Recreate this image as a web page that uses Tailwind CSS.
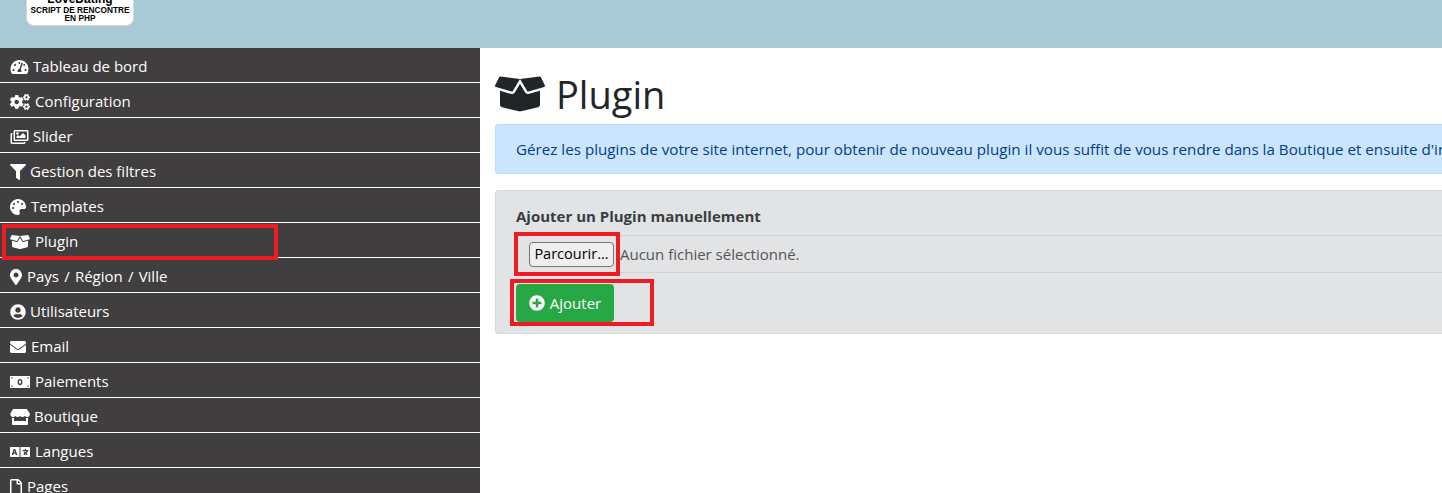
<!DOCTYPE html>
<html lang="fr">
<head>
    <meta charset="UTF-8">
    <meta name="viewport" content="width=device-width, initial-scale=1.0">
    <title>Plugin</title>
    <script src="https://cdn.jsdelivr.net/npm/@tailwindcss/browser@4"></script>
</head>
<body class="h-[493px] overflow-hidden bg-white font-['Open_Sans',sans-serif] text-[15px] text-[#212529]">

    <!-- Header -->
    <header class="h-12 overflow-hidden bg-[#a9c9d5] pl-[26px]">
        <div class="mt-[-8px] h-[34px] w-[108px] rounded-b-lg border border-[#d8d8d8] bg-white text-center font-['Liberation_Sans',sans-serif] font-bold leading-none text-black">
            <p class="text-[12px] leading-[13px]">LoveDating</p>
            <p class="text-[8.3px] leading-[8px]">SCRIPT DE RENCONTRE</p>
            <p class="text-[8.3px] leading-[8px]">EN PHP</p>
        </div>
    </header>

    <div class="flex">
        <!-- Sidebar -->
        <nav class="w-[480px] shrink-0 bg-[#403e3f] text-white">
            <a class="flex h-[35px] items-center gap-[4px] border-b border-white pt-[3px] pl-[10px]">
                <svg class="h-[16px] w-[19px] fill-current" viewBox="0 0 576 512"><path d="M288 32C128.94 32 0 160.94 0 320c0 52.8 14.25 102.26 39.06 144.8 5.61 9.62 16.3 15.2 27.44 15.2h443c11.14 0 21.83-5.58 27.44-15.2C561.75 422.26 576 372.8 576 320c0-159.06-128.94-288-288-288zm0 64c14.71 0 26.58 10.13 30.32 23.65-1.11 2.26-2.64 4.23-3.45 6.67l-9.22 27.67c-5.13 3.49-10.97 6.01-17.64 6.01-17.67 0-32-14.33-32-32S270.33 96 288 96zM96 384c-17.67 0-32-14.33-32-32s14.33-32 32-32 32 14.33 32 32-14.33 32-32 32zm48-160c-17.67 0-32-14.33-32-32s14.33-32 32-32 32 14.33 32 32-14.33 32-32 32zm246.77-72.41l-61.33 184C343.13 347.33 352 364.54 352 384c0 11.72-3.38 22.55-8.88 32H232.88c-5.5-9.45-8.88-20.28-8.88-32 0-33.94 26.5-61.43 59.9-63.59l61.34-184.01c4.17-12.56 17.73-19.45 30.36-15.17 12.57 4.19 19.35 17.79 15.17 30.36zm14.66 57.2l15.52-46.55c3.47-1.29 7.13-2.23 11.05-2.23 17.67 0 32 14.33 32 32s-14.33 32-32 32c-11.38-.01-20.89-6.28-26.57-15.22zM480 384c-17.67 0-32-14.33-32-32s14.33-32 32-32 32 14.33 32 32-14.33 32-32 32z"/></svg>
                <span>Tableau de bord</span>
            </a>
            <a class="flex h-[35px] items-center gap-[5px] border-b border-white pt-[3px] pl-[10px]">
                <svg class="h-[16px] w-[20px] fill-current" viewBox="0 0 640 512"><path d="M512.1 191l-8.2 14.3c-3 5.3-9.4 7.5-15.1 5.4-11.8-4.4-22.6-10.7-32.1-18.6-4.6-3.8-5.8-10.5-2.8-15.7l8.2-14.3c-6.9-8-12.3-17.3-15.9-27.4h-16.5c-6 0-11.2-4.3-12.2-10.3-2-12-2.1-24.6 0-37.1 1-6 6.2-10.4 12.2-10.4h16.5c3.6-10.1 9-19.4 15.9-27.4l-8.2-14.3c-3-5.2-1.9-11.9 2.8-15.7 9.5-7.9 20.4-14.2 32.1-18.6 5.7-2.1 12.1.1 15.1 5.4l8.2 14.3c10.5-1.9 21.2-1.9 31.7 0L552 6.3c3-5.3 9.4-7.5 15.1-5.4 11.8 4.4 22.6 10.7 32.1 18.6 4.6 3.8 5.8 10.5 2.8 15.7l-8.2 14.3c6.9 8 12.3 17.3 15.9 27.4h16.5c6 0 11.2 4.3 12.2 10.3 2 12 2.1 24.6 0 37.1-1 6-6.2 10.4-12.2 10.4h-16.5c-3.6 10.1-9 19.4-15.9 27.4l8.2 14.3c3 5.2 1.9 11.9-2.8 15.7-9.5 7.9-20.4 14.2-32.1 18.6-5.7 2.1-12.1-.1-15.1-5.4l-8.2-14.3c-10.4 1.9-21.2 1.9-31.7 0zm-10.5-58.8c38.5 29.6 82.4-14.3 52.8-52.8-38.5-29.7-82.4 14.3-52.8 52.8zM386.3 286.1l33.7 16.8c10.1 5.8 14.5 18.1 10.5 29.1-8.9 24.2-26.4 46.4-42.6 65.8-7.4 8.9-20.2 11.1-30.3 5.3l-29.1-16.8c-16 13.7-34.6 24.6-54.9 31.7v33.6c0 11.6-8.3 21.6-19.7 23.6-24.6 4.2-50.4 4.4-75.9 0-11.5-2-20-11.9-20-23.6V418c-20.3-7.2-38.9-18-54.9-31.7L74 403c-10 5.8-22.9 3.6-30.3-5.3-16.2-19.4-33.3-41.6-42.2-65.7-4-10.9.4-23.2 10.5-29.1l33.3-16.8c-3.9-20.9-3.9-42.4 0-63.4L12 205.8c-10.1-5.8-14.6-18.1-10.5-29 8.9-24.2 26-46.4 42.2-65.8 7.4-8.9 20.2-11.1 30.3-5.3l29.1 16.8c16-13.7 34.6-24.6 54.9-31.7V57.1c0-11.5 8.2-21.5 19.6-23.5 24.6-4.2 50.5-4.4 76-.1 11.5 2 20 11.9 20 23.6v33.6c20.3 7.2 38.9 18 54.9 31.7l29.1-16.8c10-5.8 22.9-3.6 30.3 5.3 16.2 19.4 33.2 41.6 42.1 65.8 4 10.9.1 23.2-10 29.1l-33.7 16.8c3.9 21 3.9 42.5 0 63.5zm-117.6 21.1c59.2-77-28.7-164.9-105.7-105.7-59.2 77 28.7 164.9 105.7 105.7zm243.4 182.7l-8.2 14.3c-3 5.3-9.4 7.5-15.1 5.4-11.8-4.4-22.6-10.7-32.1-18.6-4.6-3.8-5.8-10.5-2.8-15.7l8.2-14.3c-6.9-8-12.3-17.3-15.9-27.4h-16.5c-6 0-11.2-4.3-12.2-10.3-2-12-2.1-24.6 0-37.1 1-6 6.2-10.4 12.2-10.4h16.5c3.6-10.1 9-19.4 15.9-27.4l-8.2-14.3c-3-5.2-1.9-11.9 2.8-15.7 9.5-7.9 20.4-14.2 32.1-18.6 5.7-2.1 12.1.1 15.1 5.4l8.2 14.3c10.5-1.9 21.2-1.9 31.7 0l8.2-14.3c3-5.3 9.4-7.5 15.1-5.4 11.8 4.4 22.6 10.7 32.1 18.6 4.6 3.8 5.8 10.5 2.8 15.7l-8.2 14.3c6.9 8 12.3 17.3 15.9 27.4h16.5c6 0 11.2 4.3 12.2 10.3 2 12 2.1 24.6 0 37.1-1 6-6.2 10.4-12.2 10.4h-16.5c-3.6 10.1-9 19.4-15.9 27.4l8.2 14.3c3 5.2 1.9 11.9-2.8 15.7-9.5 7.9-20.4 14.2-32.1 18.6-5.7 2.1-12.1-.1-15.1-5.4l-8.2-14.3c-10.4 1.9-21.2 1.9-31.7 0zM501.6 431c38.5 29.6 82.4-14.3 52.8-52.8-38.5-29.6-82.4 14.3-52.8 52.8z"/></svg>
                <span>Configuration</span>
            </a>
            <a class="flex h-[35px] items-center gap-[4px] border-b border-white pt-[3px] pl-[10px]">
                <svg class="h-[16px] w-[19px] fill-current" viewBox="0 0 576 512"><path d="M480 416v16c0 26.51-21.49 48-48 48H48c-26.51 0-48-21.49-48-48V176c0-26.51 21.49-48 48-48h16v48H54a6 6 0 0 0-6 6v244a6 6 0 0 0 6 6h372a6 6 0 0 0 6-6v-10h48zm42-336H150a6 6 0 0 0-6 6v244a6 6 0 0 0 6 6h372a6 6 0 0 0 6-6V86a6 6 0 0 0-6-6zm6-48c26.51 0 48 21.49 48 48v256c0 26.51-21.49 48-48 48H144c-26.51 0-48-21.49-48-48V80c0-26.51 21.49-48 48-48h384zM264 144c0 22.091-17.909 40-40 40s-40-17.909-40-40 17.909-40 40-40 40 17.909 40 40zm-72 96l39.515-39.515c4.686-4.686 12.284-4.686 16.971 0L288 240l103.515-103.515c4.686-4.686 12.284-4.686 16.971 0L480 208v80H192v-48z"/></svg>
                <span>Slider</span>
            </a>
            <a class="flex h-[35px] items-center gap-[4px] border-b border-white pt-[3px] pl-[10px]">
                <svg class="h-[16px] w-[16px] fill-current" viewBox="0 0 512 512"><path d="M487.976 0H24.028C2.71 0-8.047 25.866 7.058 40.971L192 225.941V432c0 7.831 3.821 15.17 10.237 19.662l80 55.98C298.02 518.69 320 507.493 320 487.98V225.941l184.947-184.97C520.021 25.896 509.338 0 487.976 0z"/></svg>
                <span>Gestion des filtres</span>
            </a>
            <a class="flex h-[35px] items-center gap-[5px] border-b border-white pt-[3px] pl-[10px]">
                <svg class="h-[16px] w-[16px] fill-current" viewBox="0 0 512 512"><path d="M204.3 5C104.9 24.4 24.8 104.3 5.2 203.4c-37 187 131.7 326.4 258.8 306.7 41.2-6.4 61.4-54.6 42.5-91.7-23.1-45.4 9.9-98.4 60.9-98.4h79.7c35.8 0 64.8-29.6 64.9-65.3C511.5 97.1 368.1-26.9 204.3 5zM96 320c-17.7 0-32-14.3-32-32s14.3-32 32-32 32 14.3 32 32-14.3 32-32 32zm32-128c-17.7 0-32-14.3-32-32s14.3-32 32-32 32 14.3 32 32-14.3 32-32 32zm128-64c-17.7 0-32-14.3-32-32s14.3-32 32-32 32 14.3 32 32-14.3 32-32 32zm128 64c-17.7 0-32-14.3-32-32s14.3-32 32-32 32 14.3 32 32-14.3 32-32 32z"/></svg>
                <span>Templates</span>
            </a>
            <a class="flex h-[35px] items-center gap-[5px] border-b border-white pt-[3px] pl-[10px]">
                <svg class="h-[16px] w-[20px] fill-current" viewBox="0 0 640 512"><path d="M425.7 256c-16.9 0-32.8-9-41.4-23.4L320 126l-64.2 106.6c-8.7 14.5-24.6 23.5-41.5 23.5-4.5 0-9-.6-13.3-1.9L64 215v178c0 14.7 10 27.5 24.2 31l216.2 54.1c10.2 2.5 20.9 2.5 31 0L551.8 424c14.2-3.6 24.2-16.4 24.2-31V215l-137 39.1c-4.3 1.3-8.8 1.9-13.3 1.9zm212.6-112.2L586.8 41c-3.1-6.2-9.8-9.8-16.7-8.9L320 64l91.7 152.1c3.8 6.3 11.4 9.3 18.5 7.3l197.9-56.5c9.9-2.9 14.7-13.9 10.2-23.1zM53.2 41L1.7 143.8c-4.6 9.2.3 20.2 10.1 23l197.9 56.5c7.1 2 14.7-1 18.5-7.3L320 64 69.8 32.1c-6.9-.8-13.5 2.7-16.6 8.9z"/></svg>
                <span>Plugin</span>
            </a>
            <a class="flex h-[35px] items-center gap-[5px] border-b border-white pt-[3px] pl-[10px]">
                <svg class="h-[16px] w-[12px] fill-current" viewBox="0 0 384 512"><path d="M172.268 501.67C26.97 291.031 0 269.413 0 192 0 85.961 85.961 0 192 0s192 85.961 192 192c0 77.413-26.97 99.031-172.268 309.67-9.535 13.774-29.93 13.773-39.464 0zM192 272c44.183 0 80-35.817 80-80s-35.817-80-80-80-80 35.817-80 80 35.817 80 80 80z"/></svg>
                <span class="[word-spacing:1.3px]">Pays / Région / Ville</span>
            </a>
            <a class="flex h-[35px] items-center gap-[4px] border-b border-white pt-[3px] pl-[10px]">
                <svg class="h-[16px] w-[16px] fill-current" viewBox="0 0 496 512"><path d="M248 8C111 8 0 119 0 256s111 248 248 248 248-111 248-248S385 8 248 8zm0 96c48.6 0 88 39.4 88 88s-39.4 88-88 88-88-39.4-88-88 39.4-88 88-88zm0 344c-58.7 0-111.3-26.6-146.5-68.2 18.8-35.4 55.6-59.8 98.5-59.8 2.4 0 4.8.4 7.1 1.1 13 4.2 26.6 6.9 40.9 6.9 14.3 0 28-2.7 40.9-6.9 2.3-.7 4.7-1.1 7.1-1.1 42.9 0 79.7 24.4 98.5 59.8C359.3 421.4 306.7 448 248 448z"/></svg>
                <span>Utilisateurs</span>
            </a>
            <a class="flex h-[35px] items-center gap-[5px] border-b border-white pt-[3px] pl-[10px]">
                <svg class="h-[16px] w-[16px] fill-current" viewBox="0 0 512 512"><path d="M502.3 190.8c3.9-3.1 9.7-.2 9.7 4.7V400c0 26.5-21.5 48-48 48H48c-26.5 0-48-21.5-48-48V195.6c0-5 5.7-7.8 9.7-4.7 22.4 17.4 52.1 39.5 154.1 113.6 21.1 15.4 56.7 47.8 92.2 47.6 35.7.3 72-32.8 92.3-47.6 102-74.1 131.6-96.3 154-113.7zM256 320c23.2.4 56.6-29.2 73.4-41.4 132.7-96.3 142.8-104.7 173.4-128.7 5.8-4.5 9.2-11.5 9.2-18.9v-19c0-26.5-21.5-48-48-48H48C21.5 64 0 85.5 0 112v19c0 7.4 3.4 14.3 9.2 18.9 30.6 23.9 40.7 32.4 173.4 128.7 16.8 12.2 50.2 41.8 73.4 41.4z"/></svg>
                <span>Email</span>
            </a>
            <a class="flex h-[35px] items-center gap-[5px] border-b border-white pt-[3px] pl-[10px]">
                <svg class="h-[16px] w-[20px]" viewBox="0 0 640 512"><rect y="64" width="640" height="384" fill="#fff"/><path fill="#403e3f" d="M40 104h40v40H40zM560 104h40v40h-40zM40 368h40v40H40zM560 368h40v40h-40z"/><ellipse cx="320" cy="256" rx="56" ry="78" fill="none" stroke="#403e3f" stroke-width="44"/></svg>
                <span>Paiements</span>
            </a>
            <a class="flex h-[35px] items-center gap-[4px] border-b border-white pt-[3px] pl-[10px]">
                <svg class="h-[16px] w-[20px] fill-current" viewBox="0 0 616 512"><path d="M602 118.6L537.1 15C531.3 5.7 521 0 510 0H106C95 0 84.7 5.7 78.9 15L14 118.6c-33.9 54.1-3.8 129.3 59.6 137.9 4.6.6 9.2.9 13.8.9 29.9 0 56.4-13.4 74.8-34.1 18.4 20.7 45 34.1 74.8 34.1 29.9 0 56.4-13.4 74.8-34.1 18.4 20.7 45 34.1 74.8 34.1 29.9 0 56.4-13.4 74.8-34.1 18.5 20.7 45 34.1 74.8 34.1 4.7 0 9.2-.3 13.8-.9 63.6-8.5 93.7-83.8 59.8-137.9zM529.5 288c-10 0-19.9-1.5-29.5-3.8V384H116v-99.8c-9.6 2.2-19.5 3.8-29.5 3.8-6 0-12.1-.4-18-1.2-5.6-.8-11.1-2.1-16.4-3.6V480c0 17.7 14.3 32 32 32h448c17.7 0 32-14.3 32-32V283.2c-5.4 1.6-10.8 2.9-16.4 3.6-6.1.8-12.1 1.2-18.2 1.2z"/></svg>
                <span>Boutique</span>
            </a>
            <a class="flex h-[35px] items-center gap-[5px] border-b border-white pt-[3px] pl-[10px]">
                <svg class="h-[16px] w-[20px] fill-current" viewBox="0 0 640 512"><path d="M152.1 236.2c-3.5-12.1-7.8-33.2-7.8-33.2h-.5s-4.3 21.1-7.8 33.2l-11.1 37.5H163zM616 96H336v320h280c13.3 0 24-10.7 24-24V120c0-13.3-10.7-24-24-24zm-24 120c0 6.6-5.4 12-12 12h-11.4c-6.9 23.6-21.7 47.4-42.7 69.9 8.4 6.4 17.1 12.5 26.1 18 5.5 3.4 7.3 10.5 4.1 16.2l-7.9 13.9c-3.4 5.9-10.9 7.8-16.7 4.3-12.6-7.8-24.5-16.1-35.4-24.9-10.9 8.7-22.7 17.1-35.4 24.9-5.8 3.5-13.3 1.6-16.7-4.3l-7.9-13.9c-3.2-5.6-1.4-12.8 4.2-16.2 9.3-5.7 18-11.7 26.1-18-7.9-8.4-14.9-17-21-25.7-4-5.7-2.2-13.6 3.7-17.1l6.5-3.9 7.3-4.3c5.4-3.2 12.4-1.7 16 3.4 5 7 10.8 14 17.4 20.9 13.5-14.2 23.8-28.9 30-43.2H412c-6.6 0-12-5.4-12-12v-16c0-6.6 5.4-12 12-12h64v-16c0-6.6 5.4-12 12-12h16c6.6 0 12 5.4 12 12v16h64c6.6 0 12 5.4 12 12zM0 120v272c0 13.3 10.7 24 24 24h280V96H24c-13.3 0-24 10.7-24 24zm58.9 216.1L116.4 167c1.7-4.9 6.2-8.1 11.4-8.1h32.5c5.1 0 9.7 3.3 11.4 8.1l57.5 169.1c2.6 7.8-3.1 15.9-11.4 15.9h-22.9a12 12 0 0 1-11.5-8.6L175 311h-62.1l-9.1 32.3c-1.5 5.2-6.1 8.7-11.5 8.7H70.3c-8.2 0-14-8.1-11.4-15.9z"/></svg>
                <span>Langues</span>
            </a>
            <a class="flex h-[35px] items-center gap-[5px] border-b border-white pt-[3px] pl-[10px]">
                <svg class="h-[16px] w-[12px] fill-current" viewBox="0 0 384 512"><path d="M369.9 97.9L286 14C277 5 264.8-.1 252.1-.1H48C21.5 0 0 21.5 0 48v416c0 26.5 21.5 48 48 48h288c26.5 0 48-21.5 48-48V131.9c0-12.7-5.1-25-14.1-34zM332.1 128H256V51.9l76.1 76.1zM48 464V48h160v104c0 13.3 10.7 24 24 24h104v288H48z"/></svg>
                <span>Pages</span>
            </a>
        </nav>

        <!-- Content -->
        <main class="min-w-0 flex-1 pl-[15px]">
            <div class="flex h-[76px] items-center gap-[11px] pt-[16px]">
                <svg class="h-[40px] w-[50px] fill-[#212529]" viewBox="0 0 640 512"><path d="M425.7 256c-16.9 0-32.8-9-41.4-23.4L320 126l-64.2 106.6c-8.7 14.5-24.6 23.5-41.5 23.5-4.5 0-9-.6-13.3-1.9L64 215v178c0 14.7 10 27.5 24.2 31l216.2 54.1c10.2 2.5 20.9 2.5 31 0L551.8 424c14.2-3.6 24.2-16.4 24.2-31V215l-137 39.1c-4.3 1.3-8.8 1.9-13.3 1.9zm212.6-112.2L586.8 41c-3.1-6.2-9.8-9.8-16.7-8.9L320 64l91.7 152.1c3.8 6.3 11.4 9.3 18.5 7.3l197.9-56.5c9.9-2.9 14.7-13.9 10.2-23.1zM53.2 41L1.7 143.8c-4.6 9.2.3 20.2 10.1 23l197.9 56.5c7.1 2 14.7-1 18.5-7.3L320 64 69.8 32.1c-6.9-.8-13.5 2.7-16.6 8.9z"/></svg>
                <h1 class="text-[38px] leading-none">Plugin</h1>
            </div>

            <div class="flex h-[50px] items-center whitespace-nowrap rounded-l border border-r-0 border-[#b8daff] bg-[#cce5ff] pl-5 pt-px text-[15.2px] text-[#004085]">
                Gérez les plugins de votre site internet, pour obtenir de nouveau plugin il vous suffit de vous rendre dans la Boutique et ensuite d'installer le plugin de votre choix
            </div>

            <div class="mt-4 h-[144px] rounded-l border border-r-0 border-[#d6d8db] bg-[#e2e3e5] pl-5 pt-[14px] text-[#383d41]">
                <h2 class="h-[30px] font-bold">Ajouter un Plugin manuellement</h2>
                <div class="flex h-[38px] items-center gap-[6px] border-y border-[#d1d2d4] pl-[13px]">
                    <button class="flex h-[25px] w-[85px] items-center justify-center rounded-[4px] border border-[#767676] bg-[#efefef] text-[14.5px] text-black">Parcourir...</button>
                    <span class="pt-px text-[#555]">Aucun fichier sélectionné.</span>
                </div>
                <button class="mt-[11px] flex h-[38px] w-[98px] items-center justify-center gap-[5px] rounded bg-[#28a745] text-white">
                    <svg class="h-4 w-4 fill-current" viewBox="0 0 512 512"><path d="M256 8C119 8 8 119 8 256s111 248 248 248 248-111 248-248S393 8 256 8zm144 276c0 6.6-5.4 12-12 12h-92v92c0 6.6-5.4 12-12 12h-56c-6.6 0-12-5.4-12-12v-92h-92c-6.6 0-12-5.4-12-12v-56c0-6.6 5.4-12 12-12h92v-92c0-6.6 5.4-12 12-12h56c6.6 0 12 5.4 12 12v92h92c6.6 0 12 5.4 12 12v56z"/></svg>
                    <span>Ajouter</span>
                </button>
            </div>
        </main>
    </div>

    <!-- Red annotation boxes drawn on the screenshot -->
    <div class="absolute left-[2px] top-[224px] h-[36px] w-[276px] border-[4px] border-[#ed1c24]"></div>
    <div class="absolute left-[514px] top-[232px] h-[44px] w-[106px] border-[4px] border-[#ed1c24]"></div>
    <div class="absolute left-[510px] top-[279px] h-[47px] w-[144px] border-[4px] border-[#ed1c24]"></div>
</body>
</html>
